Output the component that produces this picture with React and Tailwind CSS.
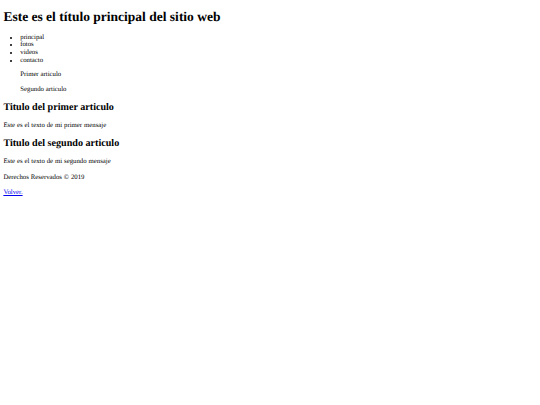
// Plain HTML page with browser default styles, drawn at 0.421875 scale (1280 -> 540)
const links = ['principal', 'fotos', 'videos', 'contacto'];

function Articulo({ titulo, texto }) {
  return (
    <article>
      <h2 className="text-[10.125px] leading-[11.64px] font-bold my-[8.404px] [word-spacing:0]">{titulo}</h2>
      <p className="my-[8.404px]">{texto}</p>
    </article>
  );
}

export default function App() {
  return (
    <div className="min-h-[405px] bg-white text-black px-[3.375px] pt-px text-[6.75px] leading-[7.7625px] [word-spacing:0.25px] [text-rendering:geometricPrecision] font-['Liberation_Serif','Times_New_Roman',serif]">
      <header>
        <h1 className="text-[13.5px] leading-[15.525px] font-bold mt-[8.045px] mb-[9.045px] [word-spacing:0]">
          Este es el título principal del sitio web
        </h1>
        <nav>
          <ul className="list-disc pl-[16.875px] my-[6.75px]">
            {links.map(l => (
              <li key={l}>{l}</li>
            ))}
          </ul>
        </nav>
      </header>
      <aside className="ml-[16.875px]">
        <p className="my-[6.75px]">Primer articulo</p>
        <p className="my-[6.75px]">Segundo articulo</p>
      </aside>
      <main>
        <Articulo titulo="Titulo del primer articulo" texto="Este es el texto de mi primer mensaje" />
        <Articulo titulo="Titulo del segundo articulo" texto="Este es el texto de mi segundo mensaje" />
      </main>
      <footer>
        <p className="my-[6.75px]">Derechos Reservados © 2019</p>
        <p className="my-[6.75px]">
          <a href="#" className="text-[#0000ee] underline">Volver.</a>
        </p>
      </footer>
    </div>
  );
}
